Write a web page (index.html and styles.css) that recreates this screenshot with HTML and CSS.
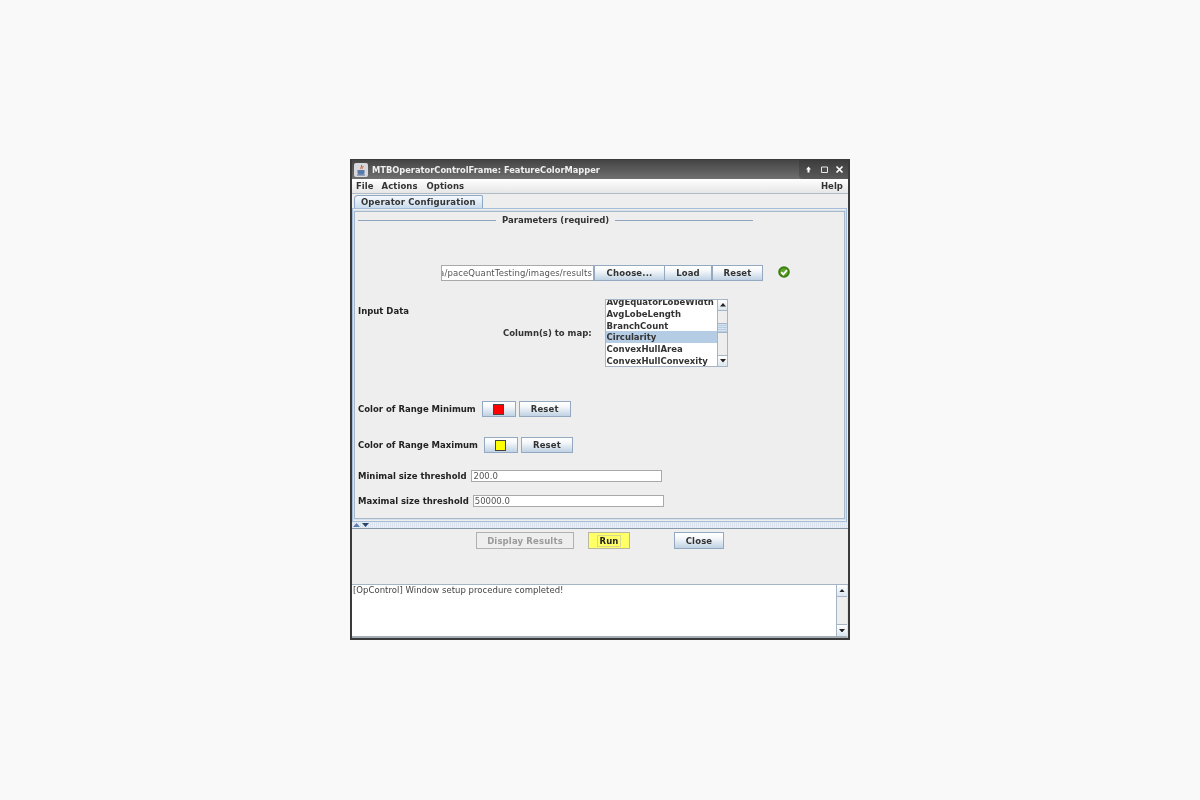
FILE: index.html
```html
<!DOCTYPE html>
<html lang="en">
<head>
<meta charset="utf-8">
<title>MTBOperatorControlFrame: FeatureColorMapper</title>
<link rel="stylesheet" href="styles.css">
</head>
<body>
<div class="window">
  <div class="titlebar">
    <span class="app-icon"><svg viewBox="0 0 14 14" width="14" height="14"><rect x="0" y="0" width="14" height="14" rx="2" fill="#d8d8dc"/><path d="M7.500 2c1 1.500-1.500 2.500-.5 4M9 3c.5 1-1 1.500-.5 2.500" fill="none" stroke="#d0552a" stroke-width="1"/><path d="M3.500 7h7v2.500c0 1.500-1 2-3.500 2s-3.500-.5-3.500-2z" fill="#5a78a8"/><path d="M3 12h8" stroke="#4a6a9c" stroke-width="1"/></svg></span>
    <span class="title-text">MTBOperatorControlFrame: FeatureColorMapper</span>
    <span class="win-controls">
      <svg viewBox="0 0 9 9" width="9" height="9"><path d="M4.500 1.500 7 4.500H5.500V7.500h-2V4.500H2z" fill="#fff"/></svg>
      <svg viewBox="0 0 9 9" width="9" height="9"><path d="M1.500 2h6v5.500h-6z" fill="none" stroke="#e8e8e8" stroke-width="1"/></svg>
      <svg viewBox="0 0 9 9" width="9" height="9"><path d="M1.500 1.500l6 6M7.500 1.500l-6 6" stroke="#fff" stroke-width="1.700"/></svg>
    </span>
  </div>
  <div class="menubar">
    <span class="menu">File</span><span class="menu">Actions</span><span class="menu options">Options</span>
    <span class="menu help">Help</span>
  </div>
  <div class="tabstrip"><span class="tab">Operator Configuration</span></div>
  <div class="tabpanel">
    <div class="inner">
      <div class="group-title"><span class="rule short"></span><span class="group-label">Parameters (required)</span><span class="rule long"></span></div>
      <div class="file-row">
        <div class="field path"><span>a/paceQuantTesting/images/results</span></div>
        <button class="btn choose">Choose...</button><button class="btn load">Load</button><button class="btn reset-file">Reset</button>
        <svg class="ok" viewBox="0 0 12 12" width="12" height="12"><circle cx="6" cy="6" r="5.800" fill="#3a7f10"/><circle cx="6" cy="6" r="3.800" fill="#5fa52c"/><path d="M3.200 6.200 5.300 8.300 9 4.200" fill="none" stroke="#fff" stroke-width="1.900"/></svg>
      </div>
      <div class="data-row">
        <span class="lbl input-data">Input Data</span>
        <span class="lbl plain columns-lbl">Column(s) to map:</span>
        <div class="listbox">
          <div class="list-items">
            <div class="item clip">AvgEquatorLobeWidth</div>
            <div class="item">AvgLobeLength</div>
            <div class="item">BranchCount</div>
            <div class="item selected">Circularity</div>
            <div class="item">ConvexHullArea</div>
            <div class="item">ConvexHullConvexity</div>
          </div>
          <div class="vscroll">
            <span class="arrow"><svg viewBox="0 0 7 4" width="6" height="3.500"><path d="M0 4 3.500 0 7 4z" fill="#222"/></svg></span>
            <span class="track list-track"><span class="thumb"></span></span>
            <span class="arrow"><svg viewBox="0 0 7 4" width="6" height="3.500"><path d="M0 0 3.500 4 7 0z" fill="#222"/></svg></span>
          </div>
        </div>
      </div>
      <div class="color-row first">
        <span class="lbl">Color of Range Minimum</span>
        <button class="btn swatch-btn"><span class="swatch red"></span></button>
        <button class="btn reset-color">Reset</button>
      </div>
      <div class="color-row second">
        <span class="lbl">Color of Range Maximum</span>
        <button class="btn swatch-btn"><span class="swatch yellow"></span></button>
        <button class="btn reset-color">Reset</button>
      </div>
      <div class="size-row min"><span class="lbl">Minimal size threshold</span><div class="field num">200.0</div></div>
      <div class="size-row max"><span class="lbl">Maximal size threshold</span><div class="field num">50000.0</div></div>
    </div>
  </div>
  <div class="divider">
    <svg viewBox="0 0 16 4" width="16" height="4"><path d="M0 4 3.500 0 7 4z" fill="#5a7fb0"/><path d="M9 0 12.500 4 16 0z" fill="#27456e"/></svg>
  </div>
  <div class="actions">
    <button class="btn disabled">Display Results</button>
    <button class="btn run"><span class="run-focus">Run</span></button>
    <button class="btn close">Close</button>
  </div>
  <div class="log">
    <div class="log-text">[OpControl] Window setup procedure completed!</div>
    <div class="vscroll log-scroll">
      <span class="arrow"><svg viewBox="0 0 7 4" width="6" height="3.500"><path d="M0 4 3.500 0 7 4z" fill="#222"/></svg></span>
      <span class="track"></span>
      <span class="arrow"><svg viewBox="0 0 7 4" width="6" height="3.500"><path d="M0 0 3.500 4 7 0z" fill="#222"/></svg></span>
    </div>
  </div>
</div>
</body>
</html>
```

FILE: styles.css
```css
* { box-sizing: border-box; }
html, body { height: 100%; }
body {
  margin: 0;
  padding-bottom: 1px;
  background: #f9f9f9;
  display: flex;
  align-items: center;
  justify-content: center;
  font-family: "DejaVu Sans", sans-serif;
  font-size: 8.5px;
  color: #333;
}
.window {
  width: 500px;
  height: 481px;
  background: #eeeeee;
  border: 1px solid #3a3a3a;
  border-left-width: 2px;
  border-right-width: 2px;
  border-bottom-width: 2px;
  display: flex;
  flex-direction: column;
  filter: blur(0.35px);
}
.titlebar {
  height: 19px;
  flex: none;
  display: flex;
  align-items: center;
  padding-left: 2px;
  background: linear-gradient(#444, #707070);
  color: #f0f0f0;
  font-weight: bold;
  font-size: 8.3px;
}
.app-icon { display: flex; margin-right: 4px; }
.title-text { flex: 1; }
.win-controls {
  height: 19px;
  width: 49px;
  display: flex;
  align-items: center;
  justify-content: space-between;
  padding: 0 4px 0 5px;
  background: linear-gradient(#3c3c3c, #5a5a5a);
  border-bottom-left-radius: 4px;
}
.menubar {
  height: 15px;
  flex: none;
  display: flex;
  align-items: center;
  padding: 0 5px 0 4px;
  background: linear-gradient(#ffffff, #e6e6e6);
  border-bottom: 1px solid #b0bcc8;
  font-weight: bold;
  color: #333;
}
.menu { margin-right: 8px; letter-spacing: .05px; }
.menu.options { margin-left: 1px; }
.menu.help { margin-left: auto; margin-right: 0; }
.tabstrip {
  height: 14px;
  flex: none;
  padding: 1px 0 0 2px;
  display: flex;
}
.tab {
  width: 129px;
  height: 14px;
  padding-left: 6px;
  line-height: 13px;
  font-weight: bold;
  letter-spacing: .13px;
  color: #333;
  white-space: nowrap;
  background: linear-gradient(#f5f9fd, #c6d9ec);
  border: 1px solid #8ea8c4;
  border-bottom: 0;
  border-radius: 4px 2px 0 0;
}
.tabpanel {
  height: 314px;
  flex: none;
  margin-right: 1px;
  padding: 2px 1px;
  border: 1px solid #a5bdd6;
  background: #eeeeee;
}
.inner {
  height: 100%;
  border: 1px solid #a9b8c6;
  padding: 0 0 0 3px;
  box-shadow: 0 0 0 1px #d4e2f0;
}
.group-title {
  height: 12px;
  margin-top: 2px;
  display: flex;
  align-items: center;
  font-weight: bold;
  color: #333;
}
.rule { height: 1px; background: #8ea3bd; display: block; }
.rule.short { width: 138px; }
.rule.long { width: 138px; }
.group-label { margin: 0 6px; }
.file-row {
  height: 16px;
  margin: 39px 0 0 83px;
  display: flex;
  align-items: center;
}
.field {
  background: #fff;
  border: 1px solid #a9a9a9;
  color: #555;
  overflow: hidden;
  white-space: nowrap;
}
.field.path {
  width: 153px;
  height: 16px;
  line-height: 14px;
  letter-spacing: .1px;
  padding-right: 1px;
  display: flex;
  justify-content: flex-end;
}
.btn {
  font: bold 8.5px "DejaVu Sans", sans-serif;
  color: #333;
  height: 16px;
  padding: 0;
  margin: 0;
  border: 1px solid #94a9bf;
  background: linear-gradient(#ffffff, #f4f7fa 35%, #bfd2e4);
  letter-spacing: .15px;
}
.choose { width: 71px; }
.load { width: 48px; margin-left: -1px; }
.reset-file { width: 51px; }
.ok { margin: -2px 0 0 15px; }
.data-row {
  height: 68px;
  margin-top: 18px;
  display: flex;
}
.lbl { font-weight: bold; color: #222; white-space: nowrap; }
.lbl.plain { color: #333; }
.input-data { width: 145px; margin-top: 7px; }
.columns-lbl { width: 102px; margin-top: 29px; }
.listbox {
  width: 123px;
  height: 68px;
  display: flex;
  background: #fff;
  border: 1px solid #a5b5c5;
}
.list-items { flex: 1; overflow: hidden; color: #333; font-weight: bold; padding-left: .5px; }
.item { height: 11.75px; line-height: 12px; white-space: nowrap; }
.item.clip { margin-top: -4px; }
.item.selected { background: #b4cce4; margin-left: -.5px; padding-left: .5px; }
.vscroll {
  width: 10px;
  flex: none;
  display: flex;
  flex-direction: column;
  background: #eeeeee;
  border-left: 1px solid #a5b5c5;
}
.arrow {
  height: 11px;
  flex: none;
  display: flex;
  align-items: center;
  justify-content: center;
  background: linear-gradient(#fff, #dce6ef);
  border-bottom: 1px solid #a5b5c5;
}
.arrow:last-child { border-bottom: 0; border-top: 1px solid #a5b5c5; }
.track { flex: 1; position: relative; display: block; background: #eeeeee; }
.thumb {
  position: absolute;
  left: 0;
  right: 0;
  top: 12px;
  height: 10px;
  background: repeating-linear-gradient(#d5e2f0 0 1px, #b9cee5 1px 2px);
  border-top: 1px solid #a5b5c5;
  border-bottom: 1px solid #a5b5c5;
}
.color-row {
  display: flex;
  align-items: center;
  height: 16px;
}
.color-row.first { margin-top: 34px; }
.color-row.second { margin-top: 20px; }
.swatch-btn {
  width: 34px;
  margin: 0 3px 0 6px;
  display: flex;
  align-items: center;
  justify-content: center;
}
.swatch { width: 11px; height: 11px; border: 1px solid #444; display: block; }
.swatch.red { background: #ff0000; }
.swatch.yellow { background: #ffff00; }
.reset-color { width: 52px; }
.size-row { display: flex; align-items: center; height: 12px; }
.size-row.min { margin-top: 17px; }
.size-row.max { margin-top: 13px; }
.num { width: 191px; height: 12px; line-height: 10px; padding-left: 1px; }
.size-row.min .num { margin-left: 5px; }
.size-row.max .num { margin-left: 4px; }
.divider {
  height: 7px;
  flex: none;
  display: flex;
  align-items: center;
  padding-left: 1px;
  border-bottom: 1px solid #8a98a8;
  background: repeating-linear-gradient(90deg, #dbe4ee 0 1px, #eeeeee 1px 2px);
}
.actions {
  height: 56px;
  flex: none;
  display: flex;
  align-items: flex-start;
  padding: 3px 0 0 124px;
  border-bottom: 1px solid #a5b5c5;
}
.actions .btn { height: 17px; padding-top: 1px; }
.disabled {
  width: 98px;
  color: #9a9a9a;
  background: #eeeeee;
  border: 1px solid #b0b0b0;
}
.run {
  width: 42px;
  margin-left: 14px;
  background: #ffff66;
  border: 1px solid #b8b8a0;
  color: #222;
}
.run-focus { border: 1px solid #d8d890; padding: 0 1px; }
.close { width: 50px; margin-left: 44px; }
.log {
  flex: 1;
  display: flex;
  background: #fff;
  min-height: 0;
  border-bottom: 2px solid #a5adb5;
  border-right: 1px solid #dde3ea;
}
.log-text { flex: 1; color: #444; padding: 0 0 0 1px; letter-spacing: .03px; }
.log-scroll { width: 11px; }
.log-scroll .arrow { height: 12px; }
```
